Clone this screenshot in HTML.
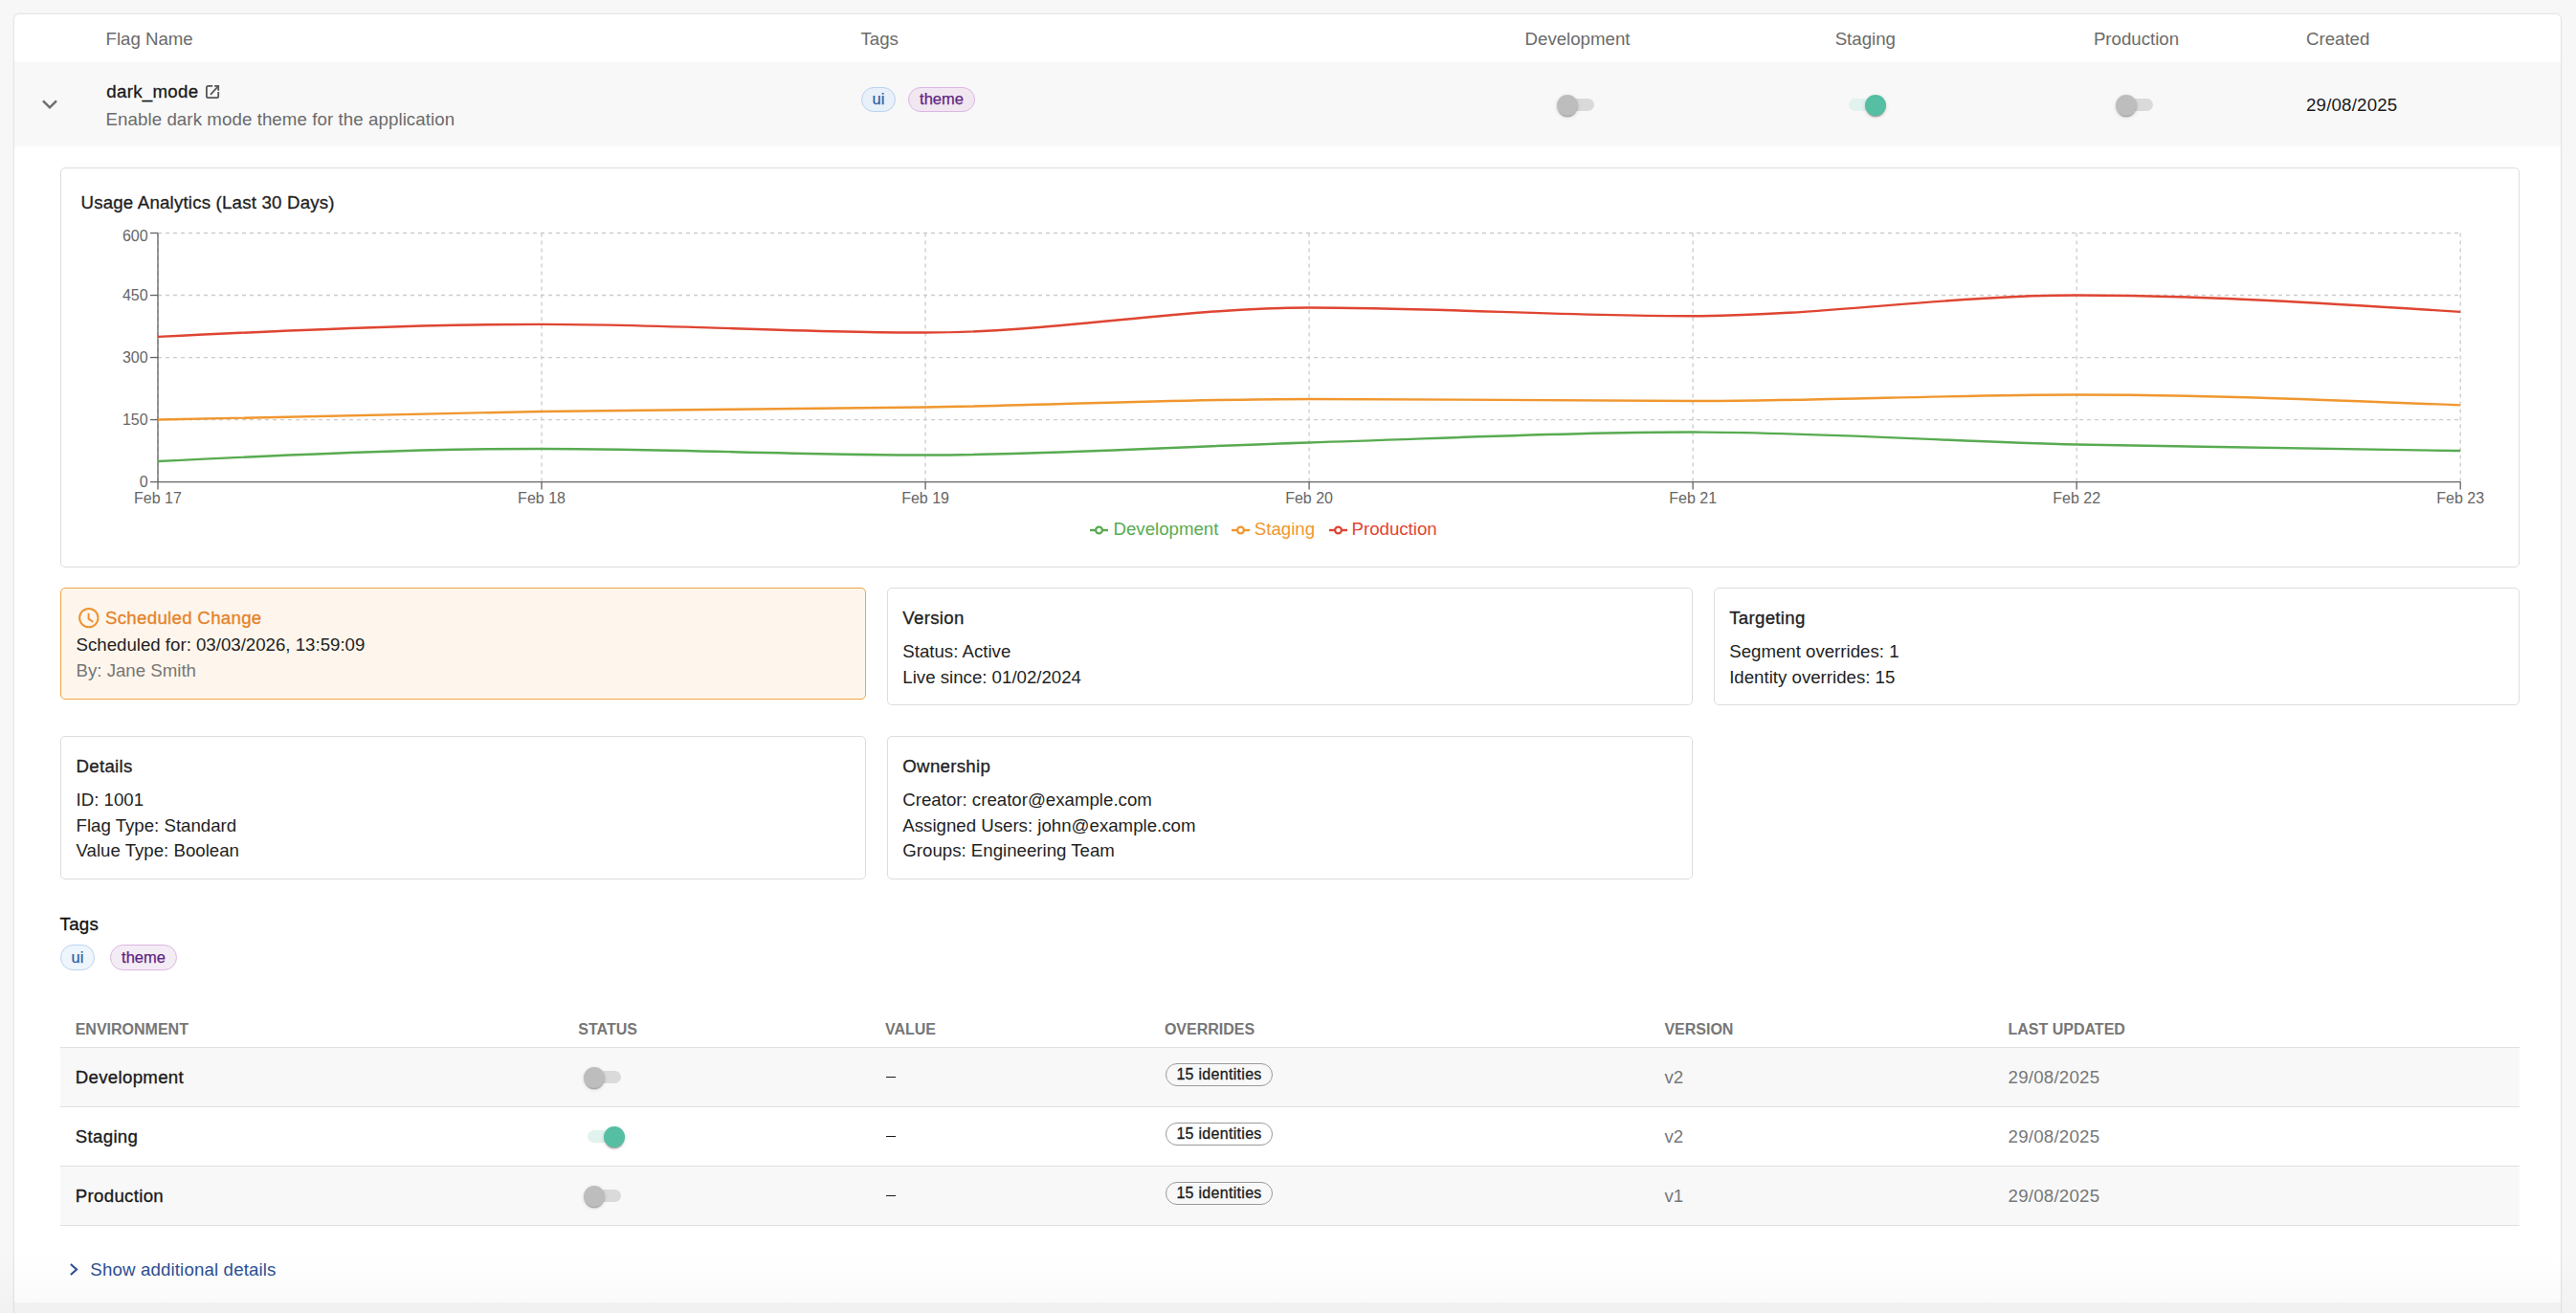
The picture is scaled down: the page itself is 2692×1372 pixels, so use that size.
<!DOCTYPE html>
<html><head><meta charset="utf-8"><title>Flag details</title>
<style>
html,body{margin:0;padding:0}
body{width:2692px;height:1372px;overflow:hidden;background:#f7f7f7;position:relative;font-family:"Liberation Sans",sans-serif}
.abs{position:absolute}
.card{position:absolute;left:15px;top:15px;width:2661px;height:1400px;background:#fff;border-radius:5px;box-shadow:0 0 0 1px rgba(0,0,0,.055),0 0 4px rgba(0,0,0,.05);overflow:hidden}
.t{position:absolute;white-space:nowrap;line-height:1}
.med{-webkit-text-stroke:0.32px currentColor;letter-spacing:0.3px}
.b{font-weight:700}
.box{position:absolute;box-sizing:border-box;border:1.33px solid #dddddd;border-radius:5px}
.chip{position:absolute;box-sizing:border-box;border:1.33px solid;border-radius:14px;text-align:center;font-family:"Liberation Sans",sans-serif;-webkit-text-stroke:0.25px currentColor}
.chip2{position:absolute;box-sizing:border-box;width:111.7px;height:23.8px;border:1.33px solid #9a9a9a;border-radius:12px;font-size:16px;line-height:21px;text-align:center;color:#1a1a1a;-webkit-text-stroke:0.3px currentColor;letter-spacing:0.3px}
.track{position:absolute;width:35.2px;height:13px;border-radius:6.5px}
.knob{position:absolute;width:22px;height:22px;border-radius:50%;box-shadow:0 2.6px 1.3px -1.3px rgba(0,0,0,.2),0 1.3px 1.3px 0 rgba(0,0,0,.14),0 1.3px 4px 0 rgba(0,0,0,.12)}
</style></head><body>
<div class="card"></div>
<div class="t " style="left:110.50px;top:31.70px;font-size:18.67px;color:#6b6b6b;">Flag Name</div>
<div class="t " style="left:899.50px;top:31.70px;font-size:18.67px;color:#6b6b6b;">Tags</div>
<div class="t " style="left:1648.50px;top:31.70px;font-size:18.67px;color:#6b6b6b;transform:translateX(-50%)">Development</div>
<div class="t " style="left:1949.30px;top:31.70px;font-size:18.67px;color:#6b6b6b;transform:translateX(-50%)">Staging</div>
<div class="t " style="left:2232.50px;top:31.70px;font-size:18.67px;color:#6b6b6b;transform:translateX(-50%)">Production</div>
<div class="t " style="left:2410.00px;top:31.70px;font-size:18.67px;color:#6b6b6b;">Created</div>
<div class="abs" style="left:15px;top:65px;width:2661px;height:88px;background:#f8f8f8"></div>
<svg class="abs" style="left:0;top:0" width="80" height="140"><polyline points="45,105.4 52,112.3 59,105.4" fill="none" stroke="#6e6e6e" stroke-width="2.5"/></svg>
<div class="t med" style="left:111.30px;top:86.70px;font-size:18.67px;color:#1a1a1a;">dark_mode</div>
<svg class="abs" style="left:214px;top:88px" width="16" height="16" viewBox="0 0 16 16"><path d="M8.2 1.9 H3.5 a1.6 1.6 0 0 0 -1.6 1.6 V12.5 a1.6 1.6 0 0 0 1.6 1.6 H12.6 a1.6 1.6 0 0 0 1.6 -1.6 V8.1" fill="none" stroke="#555" stroke-width="1.8"/><path d="M10.1 1.9 H14.2 V6.7" fill="none" stroke="#555" stroke-width="1.8"/><path d="M14.1 2 L6 10.8" fill="none" stroke="#555" stroke-width="1.8"/></svg>
<div class="t " style="left:110.50px;top:115.70px;font-size:18.67px;color:#6b6b6b;letter-spacing:0.09px">Enable dark mode theme for the application</div>
<div class="chip" style="left:900.1px;top:91px;width:35.8px;height:25.7px;background:#e8f0f9;border-color:#b9d3f0;color:#2c5fa3;font-size:16.5px;line-height:23.7px">ui</div>
<div class="chip" style="left:949.1px;top:91px;width:69.9px;height:25.7px;background:#f1e7f1;border-color:#dcb6e3;color:#5f2480;font-size:16.5px;line-height:23.7px">theme</div>
<div class="track" style="left:1630.6px;top:103.4px;background:#dadada"></div><div class="knob" style="left:1626.9px;top:98.9px;background:#bdbdbd"></div>
<div class="track" style="left:1932.0px;top:103.1px;background:#e2f2ee"></div><div class="knob" style="left:1949.2px;top:98.6px;background:#55bea3"></div>
<div class="track" style="left:2214.9px;top:103.3px;background:#dadada"></div><div class="knob" style="left:2211.2px;top:98.8px;background:#bdbdbd"></div>
<div class="t " style="left:2410.00px;top:100.70px;font-size:18.67px;color:#1a1a1a;letter-spacing:0.2px">29/08/2025</div>
<div class="box" style="left:63px;top:175px;width:2570px;height:418px"></div>
<div class="t med" style="left:84.50px;top:202.70px;font-size:18.67px;color:#1f1f1f;letter-spacing:0.2px">Usage Analytics (Last 30 Days)</div>
<svg class="abs" style="left:0;top:0" width="2692" height="600"><line x1="165.0" y1="438.58" x2="2571.20" y2="438.58" stroke="#cccccc" stroke-width="1.33" stroke-dasharray="4 4"/><line x1="165.0" y1="373.55" x2="2571.20" y2="373.55" stroke="#cccccc" stroke-width="1.33" stroke-dasharray="4 4"/><line x1="165.0" y1="308.52" x2="2571.20" y2="308.52" stroke="#cccccc" stroke-width="1.33" stroke-dasharray="4 4"/><line x1="165.0" y1="243.50" x2="2571.20" y2="243.50" stroke="#cccccc" stroke-width="1.33" stroke-dasharray="4 4"/><line x1="165.00" y1="243.50" x2="165.00" y2="503.60" stroke="#cccccc" stroke-width="1.33" stroke-dasharray="4 4"/><line x1="566.03" y1="243.50" x2="566.03" y2="503.60" stroke="#cccccc" stroke-width="1.33" stroke-dasharray="4 4"/><line x1="967.07" y1="243.50" x2="967.07" y2="503.60" stroke="#cccccc" stroke-width="1.33" stroke-dasharray="4 4"/><line x1="1368.10" y1="243.50" x2="1368.10" y2="503.60" stroke="#cccccc" stroke-width="1.33" stroke-dasharray="4 4"/><line x1="1769.13" y1="243.50" x2="1769.13" y2="503.60" stroke="#cccccc" stroke-width="1.33" stroke-dasharray="4 4"/><line x1="2170.17" y1="243.50" x2="2170.17" y2="503.60" stroke="#cccccc" stroke-width="1.33" stroke-dasharray="4 4"/><line x1="2571.20" y1="243.50" x2="2571.20" y2="503.60" stroke="#cccccc" stroke-width="1.33" stroke-dasharray="4 4"/><line x1="165.0" y1="243.50" x2="165.0" y2="503.6" stroke="#666" stroke-width="1.33"/><line x1="165.0" y1="503.6" x2="2571.20" y2="503.6" stroke="#666" stroke-width="1.33"/><line x1="157" y1="503.60" x2="165.0" y2="503.60" stroke="#666" stroke-width="1.33"/><line x1="157" y1="438.58" x2="165.0" y2="438.58" stroke="#666" stroke-width="1.33"/><line x1="157" y1="373.55" x2="165.0" y2="373.55" stroke="#666" stroke-width="1.33"/><line x1="157" y1="308.52" x2="165.0" y2="308.52" stroke="#666" stroke-width="1.33"/><line x1="157" y1="243.50" x2="165.0" y2="243.50" stroke="#666" stroke-width="1.33"/><line x1="165.00" y1="503.6" x2="165.00" y2="511.6" stroke="#666" stroke-width="1.33"/><line x1="566.03" y1="503.6" x2="566.03" y2="511.6" stroke="#666" stroke-width="1.33"/><line x1="967.07" y1="503.6" x2="967.07" y2="511.6" stroke="#666" stroke-width="1.33"/><line x1="1368.10" y1="503.6" x2="1368.10" y2="511.6" stroke="#666" stroke-width="1.33"/><line x1="1769.13" y1="503.6" x2="1769.13" y2="511.6" stroke="#666" stroke-width="1.33"/><line x1="2170.17" y1="503.6" x2="2170.17" y2="511.6" stroke="#666" stroke-width="1.33"/><line x1="2571.20" y1="503.6" x2="2571.20" y2="511.6" stroke="#666" stroke-width="1.33"/><path d="M165.00,481.93C298.68,475.42 432.36,468.92 566.03,468.92C699.71,468.92 833.39,475.42 967.07,475.42C1100.74,475.42 1234.42,466.39 1368.10,462.42C1501.78,458.44 1635.46,451.58 1769.13,451.58C1902.81,451.58 2036.49,461.33 2170.17,464.59C2303.84,467.84 2437.52,469.46 2571.20,471.09" fill="none" stroke="#58ab51" stroke-width="2.45"/><path d="M165.00,438.58C298.68,435.32 432.36,432.07 566.03,429.91C699.71,427.74 833.39,427.74 967.07,425.57C1100.74,423.40 1234.42,416.90 1368.10,416.90C1501.78,416.90 1635.46,419.07 1769.13,419.07C1902.81,419.07 2036.49,412.56 2170.17,412.56C2303.84,412.56 2437.52,417.98 2571.20,423.40" fill="none" stroke="#f0972f" stroke-width="2.45"/><path d="M165.00,351.88C298.68,345.37 432.36,338.87 566.03,338.87C699.71,338.87 833.39,347.54 967.07,347.54C1100.74,347.54 1234.42,321.53 1368.10,321.53C1501.78,321.53 1635.46,330.20 1769.13,330.20C1902.81,330.20 2036.49,308.52 2170.17,308.52C2303.84,308.52 2437.52,317.19 2571.20,325.87" fill="none" stroke="#df4532" stroke-width="2.45"/></svg>
<div class="t" style="left:0;width:154.6px;text-align:right;top:495.96px;font-size:16px;color:#666">0</div>
<div class="t" style="left:0;width:154.6px;text-align:right;top:430.96px;font-size:16px;color:#666">150</div>
<div class="t" style="left:0;width:154.6px;text-align:right;top:365.96px;font-size:16px;color:#666">300</div>
<div class="t" style="left:0;width:154.6px;text-align:right;top:300.96px;font-size:16px;color:#666">450</div>
<div class="t" style="left:0;width:154.6px;text-align:right;top:238.96px;font-size:16px;color:#666">600</div>
<div class="t" style="left:165.00px;top:512.96px;font-size:16px;color:#666;transform:translateX(-50%)">Feb 17</div>
<div class="t" style="left:566.03px;top:512.96px;font-size:16px;color:#666;transform:translateX(-50%)">Feb 18</div>
<div class="t" style="left:967.07px;top:512.96px;font-size:16px;color:#666;transform:translateX(-50%)">Feb 19</div>
<div class="t" style="left:1368.10px;top:512.96px;font-size:16px;color:#666;transform:translateX(-50%)">Feb 20</div>
<div class="t" style="left:1769.13px;top:512.96px;font-size:16px;color:#666;transform:translateX(-50%)">Feb 21</div>
<div class="t" style="left:2170.17px;top:512.96px;font-size:16px;color:#666;transform:translateX(-50%)">Feb 22</div>
<div class="t" style="left:2571.20px;top:512.96px;font-size:16px;color:#666;transform:translateX(-50%)">Feb 23</div>
<svg class="abs" style="left:1139px;top:544px" width="20" height="20"><line x1="0" y1="10" x2="19" y2="10" stroke="#58ab51" stroke-width="2.4"/><circle cx="9.5" cy="10" r="3.4" fill="#fff" stroke="#58ab51" stroke-width="2.3"/></svg>
<div class="t " style="left:1163.50px;top:543.70px;font-size:18.67px;color:#58ab51;">Development</div>
<svg class="abs" style="left:1287px;top:544px" width="20" height="20"><line x1="0" y1="10" x2="19" y2="10" stroke="#f0972f" stroke-width="2.4"/><circle cx="9.5" cy="10" r="3.4" fill="#fff" stroke="#f0972f" stroke-width="2.3"/></svg>
<div class="t " style="left:1310.80px;top:543.70px;font-size:18.67px;color:#f0972f;">Staging</div>
<svg class="abs" style="left:1388.5px;top:544px" width="20" height="20"><line x1="0" y1="10" x2="19" y2="10" stroke="#df4532" stroke-width="2.4"/><circle cx="9.5" cy="10" r="3.4" fill="#fff" stroke="#df4532" stroke-width="2.3"/></svg>
<div class="t " style="left:1412.50px;top:543.70px;font-size:18.67px;color:#df4532;">Production</div>
<div class="box" style="left:63px;top:614px;width:842px;height:117px;background:#fef6ec;border-color:#f0a445"></div>
<svg class="abs" style="left:80px;top:633px" width="26" height="26" viewBox="0 0 26 26"><circle cx="12.8" cy="12.6" r="9.7" fill="none" stroke="#ee9232" stroke-width="2"/><polyline points="12.6,7.7 12.6,13.7 17.3,16.8" fill="none" stroke="#ee9232" stroke-width="2"/></svg>
<div class="t med" style="left:110.00px;top:636.70px;font-size:18.67px;color:#e5832b;">Scheduled Change</div>
<div class="t " style="left:79.50px;top:664.70px;font-size:18.67px;color:#1f1f1f;">Scheduled for: 03/03/2026, 13:59:09</div>
<div class="t " style="left:79.50px;top:691.70px;font-size:18.67px;color:#777;">By: Jane Smith</div>
<div class="box" style="left:927px;top:614px;width:842px;height:123px"></div>
<div class="t med" style="left:943.30px;top:636.70px;font-size:18.67px;color:#1f1f1f;">Version</div>
<div class="t " style="left:943.30px;top:671.70px;font-size:18.67px;color:#1f1f1f;">Status: Active</div>
<div class="t " style="left:943.30px;top:698.70px;font-size:18.67px;color:#1f1f1f;">Live since: 01/02/2024</div>
<div class="box" style="left:1791px;top:614px;width:842px;height:123px"></div>
<div class="t med" style="left:1807.20px;top:636.70px;font-size:18.67px;color:#1f1f1f;">Targeting</div>
<div class="t " style="left:1807.20px;top:671.70px;font-size:18.67px;color:#1f1f1f;">Segment overrides: 1</div>
<div class="t " style="left:1807.20px;top:698.70px;font-size:18.67px;color:#1f1f1f;">Identity overrides: 15</div>
<div class="box" style="left:63px;top:769px;width:842px;height:150px"></div>
<div class="t med" style="left:79.50px;top:791.70px;font-size:18.67px;color:#1f1f1f;">Details</div>
<div class="t " style="left:79.50px;top:826.70px;font-size:18.67px;color:#1f1f1f;">ID: 1001</div>
<div class="t " style="left:79.50px;top:853.70px;font-size:18.67px;color:#1f1f1f;">Flag Type: Standard</div>
<div class="t " style="left:79.50px;top:879.70px;font-size:18.67px;color:#1f1f1f;">Value Type: Boolean</div>
<div class="box" style="left:927px;top:769px;width:842px;height:150px"></div>
<div class="t med" style="left:943.30px;top:791.70px;font-size:18.67px;color:#1f1f1f;">Ownership</div>
<div class="t " style="left:943.30px;top:826.70px;font-size:18.67px;color:#1f1f1f;">Creator: creator@example.com</div>
<div class="t " style="left:943.30px;top:853.70px;font-size:18.67px;color:#1f1f1f;">Assigned Users: john@example.com</div>
<div class="t " style="left:943.30px;top:879.70px;font-size:18.67px;color:#1f1f1f;">Groups: Engineering Team</div>
<div class="t med" style="left:62.50px;top:956.70px;font-size:18.67px;color:#111;">Tags</div>
<div class="chip" style="left:63px;top:987px;width:35.9px;height:26.6px;background:#eef5fc;border-color:#b9d3f0;color:#2c5fa3;font-size:16.5px;line-height:24.6px">ui</div>
<div class="chip" style="left:115px;top:987px;width:70px;height:26.6px;background:#f4ecf5;border-color:#dcb6e3;color:#5f2480;font-size:16.5px;line-height:24.6px">theme</div>
<div class="t b" style="left:78.70px;top:1067.96px;font-size:16px;color:#767676;">ENVIRONMENT</div>
<div class="t b" style="left:604.30px;top:1067.96px;font-size:16px;color:#767676;">STATUS</div>
<div class="t b" style="left:925.00px;top:1067.96px;font-size:16px;color:#767676;">VALUE</div>
<div class="t b" style="left:1216.90px;top:1067.96px;font-size:16px;color:#767676;">OVERRIDES</div>
<div class="t b" style="left:1739.40px;top:1067.96px;font-size:16px;color:#767676;">VERSION</div>
<div class="t b" style="left:2098.50px;top:1067.96px;font-size:16px;color:#767676;">LAST UPDATED</div>
<div class="abs" style="left:63px;top:1093.8px;width:2570px;height:1.4px;background:#e0e0e0"></div>
<div class="abs" style="left:63px;top:1095.2px;width:2570px;height:60.6px;background:#f8f8f8"></div>
<div class="abs" style="left:63px;top:1155.8px;width:2570px;height:1.4px;background:#e0e0e0"></div>
<div class="t med" style="left:78.80px;top:1116.70px;font-size:18.67px;color:#1a1a1a;">Development</div>
<div class="track" style="left:613.8px;top:1119.3px;background:#dadada"></div><div class="knob" style="left:610.1px;top:1114.8px;background:#bdbdbd"></div>
<div class="abs" style="left:926.3px;top:1124.6px;width:9.6px;height:1.6px;background:#1a1a1a"></div>
<div class="chip2" style="left:1218.2px;top:1111.0px">15 identities</div>
<div class="t " style="left:1739.50px;top:1116.70px;font-size:18.67px;color:#777;">v2</div>
<div class="t " style="left:2098.50px;top:1116.70px;font-size:18.67px;color:#777;letter-spacing:0.25px">29/08/2025</div>
<div class="abs" style="left:63px;top:1157.2px;width:2570px;height:60.6px;background:#ffffff"></div>
<div class="abs" style="left:63px;top:1217.8px;width:2570px;height:1.4px;background:#e0e0e0"></div>
<div class="t med" style="left:78.80px;top:1178.70px;font-size:18.67px;color:#1a1a1a;">Staging</div>
<div class="track" style="left:613.8px;top:1181.3px;background:#e2f2ee"></div><div class="knob" style="left:631.0px;top:1176.8px;background:#55bea3"></div>
<div class="abs" style="left:926.3px;top:1186.6px;width:9.6px;height:1.6px;background:#1a1a1a"></div>
<div class="chip2" style="left:1218.2px;top:1173.0px">15 identities</div>
<div class="t " style="left:1739.50px;top:1178.70px;font-size:18.67px;color:#777;">v2</div>
<div class="t " style="left:2098.50px;top:1178.70px;font-size:18.67px;color:#777;letter-spacing:0.25px">29/08/2025</div>
<div class="abs" style="left:63px;top:1219.2px;width:2570px;height:60.6px;background:#f8f8f8"></div>
<div class="abs" style="left:63px;top:1279.8px;width:2570px;height:1.4px;background:#e0e0e0"></div>
<div class="t med" style="left:78.80px;top:1240.70px;font-size:18.67px;color:#1a1a1a;">Production</div>
<div class="track" style="left:613.8px;top:1243.3px;background:#dadada"></div><div class="knob" style="left:610.1px;top:1238.8px;background:#bdbdbd"></div>
<div class="abs" style="left:926.3px;top:1248.6px;width:9.6px;height:1.6px;background:#1a1a1a"></div>
<div class="chip2" style="left:1218.2px;top:1235.0px">15 identities</div>
<div class="t " style="left:1739.50px;top:1240.70px;font-size:18.67px;color:#777;">v1</div>
<div class="t " style="left:2098.50px;top:1240.70px;font-size:18.67px;color:#777;letter-spacing:0.25px">29/08/2025</div>
<svg class="abs" style="left:60px;top:1312px" width="30" height="30"><polyline points="13.9,8.9 20.1,14.6 13.9,20" fill="none" stroke="#2a4f96" stroke-width="2.1"/></svg>
<div class="t " style="left:94.30px;top:1317.70px;font-size:18.67px;color:#2c4f92;letter-spacing:0.15px">Show additional details</div>
<div class="abs" style="left:0;top:1310px;width:2692px;height:62px;background:linear-gradient(to bottom,rgba(0,0,0,0),rgba(0,0,0,0.025));z-index:5"></div>
<div class="abs" style="left:15px;top:1360.8px;width:2661px;height:20px;background:#f6f6f6"></div>
</body></html>
